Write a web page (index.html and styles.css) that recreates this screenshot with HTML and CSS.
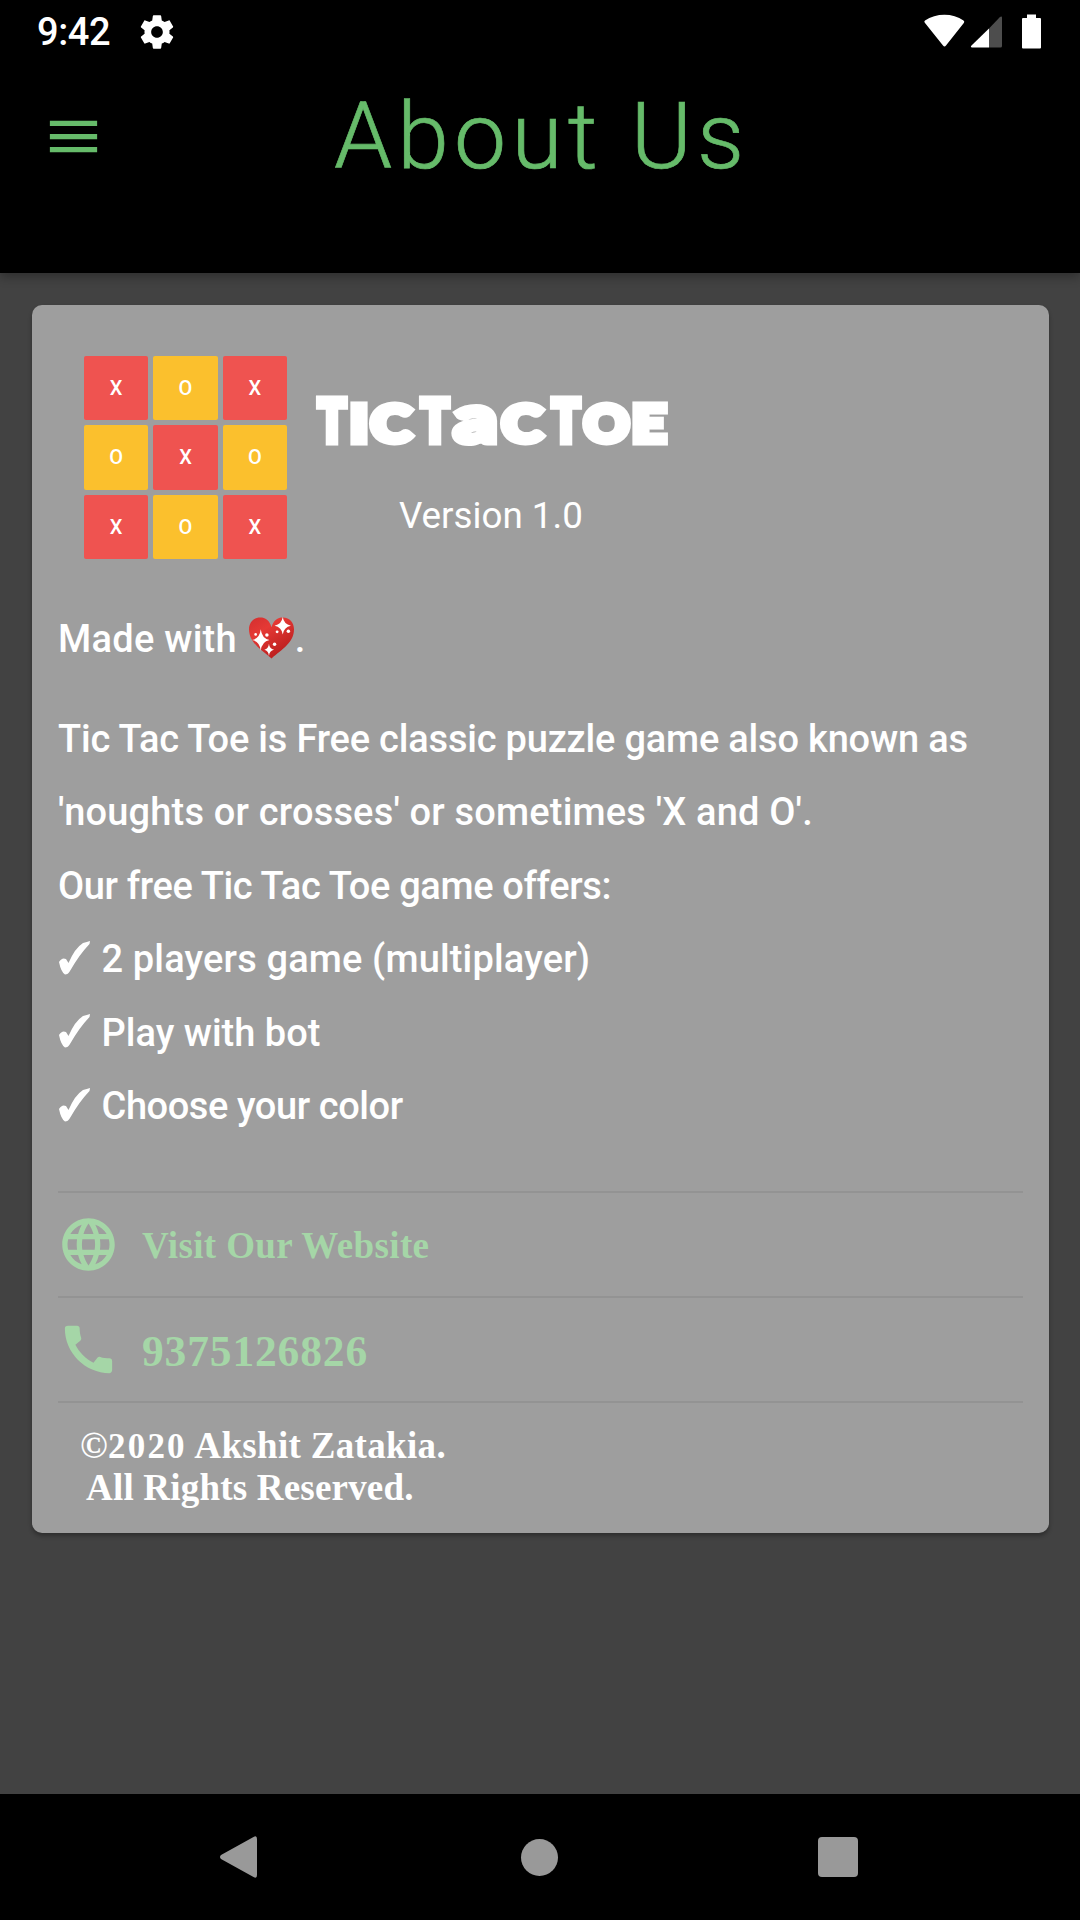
FILE: index.html
```html
<!DOCTYPE html>
<html lang="en">
<head>
<meta charset="utf-8">
<title>About Us</title>
<link rel="stylesheet" href="styles.css">
</head>
<body>
<header class="header">
  <div class="status">
    <span class="time">9:42</span>
    <svg class="gear" viewBox="0 0 24 24"><path d="M19.43 12.98c.04-.32.07-.64.07-.98s-.03-.66-.07-.98l2.11-1.65c.19-.15.24-.42.12-.64l-2-3.46c-.12-.22-.39-.3-.61-.22l-2.49 1c-.52-.4-1.08-.73-1.69-.98l-.38-2.65C14.46 2.18 14.25 2 14 2h-4c-.25 0-.46.18-.49.42l-.38 2.65c-.61.25-1.17.59-1.69.98l-2.49-1c-.23-.09-.49 0-.61.22l-2 3.46c-.13.22-.07.49.12.64l2.11 1.65c-.04.32-.07.65-.07.98s.03.66.07.98l-2.11 1.65c-.19.15-.24.42-.12.64l2 3.46c.12.22.39.3.61.22l2.49-1c.52.4 1.08.73 1.69.98l.38 2.65c.03.24.24.42.49.42h4c.25 0 .46-.18.49-.42l.38-2.65c.61-.25 1.17-.59 1.69-.98l2.49 1c.23.09.49 0 .61-.22l2-3.46c.12-.22.07-.49-.12-.64l-2.11-1.65zM12 15.5c-1.93 0-3.5-1.57-3.5-3.5s1.57-3.5 3.5-3.5 3.5 1.57 3.5 3.5-1.57 3.5-3.5 3.5z"/></svg>
    <svg class="signals" viewBox="0 0 120 36">
      <path d="M5 9Q3.500 7.500 5 6.500C16-1.200 33-1.200 43.500 6.500Q45 7.500 43.800 9L26 31.500Q24.500 33.500 23 31.500Z"/>
      <path fill="#4d4d4d" d="M69 14.500 79.500 3.500Q82 1.500 82 4V32Q82 33.500 80.500 33.500H69Z"/>
      <path d="M69 14.500V33.500H52Q50 33 51.500 31.500Z"/>
      <path d="M107 0.500H116V4H120Q121 4 121 5V33.500Q121 34.500 120 34.500H103Q102 34.500 102 33.500V5Q102 4 103 4H107Z"/>
    </svg>
  </div>
  <div class="appbar">
    <svg class="menu" viewBox="0 0 24 24"><path d="M3 18h18v-2H3v2zm0-5h18v-2H3v2zm0-7v2h18V6H3z"/></svg>
    <h1 class="title">About Us</h1>
  </div>
</header>
<main class="main">
  <section class="card">
    <div class="intro">
      <div class="board">
        <span class="x">X</span><span class="o">O</span><span class="x">X</span>
        <span class="o">O</span><span class="x">X</span><span class="o">O</span>
        <span class="x">X</span><span class="o">O</span><span class="x">X</span>
      </div>
      <div class="product">
        <svg class="wordmark" viewBox="0 0 354 56">
          <g class="cap"><text x="3" y="48" textLength="28" lengthAdjust="spacingAndGlyphs">T</text><text x="106" y="48" textLength="28" lengthAdjust="spacingAndGlyphs">T</text><text x="237" y="48" textLength="28" lengthAdjust="spacingAndGlyphs">T</text></g>
          <g class="small"><text x="35" y="48" textLength="18" lengthAdjust="spacingAndGlyphs">I</text><text x="56" y="48" textLength="40" lengthAdjust="spacingAndGlyphs">C</text><text class="low" x="139" y="48" textLength="43" lengthAdjust="spacingAndGlyphs">a</text><text x="187" y="48" textLength="40" lengthAdjust="spacingAndGlyphs">C</text><text x="269" y="48" textLength="45" lengthAdjust="spacingAndGlyphs">O</text><text x="317" y="48" textLength="34" lengthAdjust="spacingAndGlyphs">E</text></g>
        </svg>
        <p class="version">Version 1.0</p>
      </div>
    </div>
    <p class="made"><span>Made with</span>
      <svg class="heart" viewBox="0 0 44 41"><defs><linearGradient id="h" x1="0" y1="0" x2=".7" y2="1"><stop offset="0" stop-color="#d32f2f"/><stop offset=".35" stop-color="#e53935"/><stop offset="1" stop-color="#b71c1c"/></linearGradient></defs><path fill="url(#h)" d="M22 10C20 3 16 .5 11 .5 4 .5 0 6 0 12 0 25 12 32 22 40.500 32 32 44 25 44 12 44 6 40 .5 33 .5 28 .5 24 3 22 10Z"/><g fill="#fff"><path d="M33 0Q34 7 41 8.500 34 10 33 17 32 10 25 8.500 32 7 33 0ZM11.500 12Q12.500 21 20 22.500 12.500 24 11.500 33 10.500 24 3 22.500 10.500 21 11.500 12ZM19.500 26Q20 31 24.500 32 20 33 19.500 38 19 33 15 32 19 31 19.500 26Z"/><circle cx="6.500" cy="17" r="1.300"/><circle cx="17.500" cy="17.500" r="1.700"/><circle cx="27.500" cy="14.500" r="1.400"/><circle cx="38.500" cy="14" r="1.700"/><circle cx="25" cy="26.500" r="1.700"/></g></svg><span>.</span></p>
    <div class="about">
      <p class="lead">Tic Tac Toe is Free classic puzzle game also known as</p>
      <p class="alias">'noughts or crosses' or sometimes 'X and O'.</p>
      <p class="offers">Our free Tic Tac Toe game offers:</p>
      <p class="item players"><svg class="tick" viewBox="0 0 31 34"><path d="M0 21Q3 16 7 18L9.500 22Q16 7 24 2 28 1 31 0L30.500 3Q20 14 11 30 9 33.500 6 33.500 2 31 0 21Z"/></svg>2 players game (multiplayer)</p>
      <p class="item"><svg class="tick" viewBox="0 0 31 34"><path d="M0 21Q3 16 7 18L9.500 22Q16 7 24 2 28 1 31 0L30.500 3Q20 14 11 30 9 33.500 6 33.500 2 31 0 21Z"/></svg>Play with bot</p>
      <p class="item color"><svg class="tick" viewBox="0 0 31 34"><path d="M0 21Q3 16 7 18L9.500 22Q16 7 24 2 28 1 31 0L30.500 3Q20 14 11 30 9 33.500 6 33.500 2 31 0 21Z"/></svg>Choose your color</p>
    </div>
    <div class="link">
      <svg viewBox="0 0 24 24"><path d="M11.990 2C6.470 2 2 6.480 2 12s4.470 10 9.990 10C17.520 22 22 17.520 22 12S17.520 2 11.990 2zm6.930 6h-2.950c-.32-1.250-.78-2.450-1.380-3.560 1.840.63 3.370 1.910 4.330 3.560zM12 4.040c.83 1.200 1.480 2.530 1.910 3.960h-3.820c.43-1.430 1.080-2.760 1.910-3.960zM4.260 14C4.100 13.360 4 12.690 4 12s.1-1.360.26-2h3.380c-.08.66-.14 1.320-.14 2 0 .68.06 1.340.14 2H4.260zm.82 2h2.950c.32 1.250.78 2.450 1.380 3.560-1.840-.63-3.370-1.900-4.330-3.560zm2.950-8H5.080c.96-1.660 2.490-2.930 4.330-3.560C8.810 5.550 8.350 6.750 8.030 8zM12 19.960c-.83-1.200-1.480-2.530-1.910-3.960h3.820c-.43 1.430-1.080 2.760-1.910 3.960zM14.340 14H9.660c-.09-.66-.16-1.320-.16-2 0-.68.07-1.350.16-2h4.680c.09.65.16 1.320.16 2 0 .68-.07 1.340-.16 2zm.25 5.560c.6-1.110 1.060-2.310 1.380-3.560h2.950c-.96 1.650-2.490 2.930-4.330 3.560zM16.360 14c.08-.66.14-1.320.14-2 0-.68-.06-1.340-.14-2h3.380c.16.64.26 1.310.26 2s-.1 1.360-.26 2h-3.380z"/></svg>
      <span class="site">Visit Our Website</span>
    </div>
    <div class="link">
      <svg viewBox="0 0 24 24"><path d="M20.010 15.380c-1.230 0-2.420-.2-3.530-.56-.35-.12-.74-.03-1.010.24l-1.570 1.970c-2.830-1.350-5.480-3.900-6.890-6.830l1.950-1.660c.27-.28.35-.67.24-1.020-.37-1.110-.56-2.300-.56-3.530 0-.54-.45-.99-.99-.99H4.190C3.650 3 3 3.240 3 3.990 3 13.280 10.730 21 20.010 21c.71 0 .99-.63.99-1.180v-3.450c0-.54-.45-.99-.99-.99z"/></svg>
      <span class="phone">9375126826</span>
    </div>
    <footer class="legal">
      <p class="owner">©<span class="year">2020</span> Akshit Zatakia.</p>
      <p class="rights">All Rights Reserved.</p>
    </footer>
  </section>
</main>
<nav class="nav">
  <svg viewBox="0 0 38 42"><path d="M1 23Q-1 21 1 19L33.500 1Q37 -1 37 3V39Q37 43 33.500 41Z"/></svg>
  <span class="home"></span>
  <span class="recent"></span>
</nav>
</body>
</html>
```
FILE: styles.css
```css
* { box-sizing: border-box; margin: 0; padding: 0; }
body { width: 1080px; height: 1920px; display: flex; flex-direction: column; background: #424242; color: #fff; font-family: Roboto, sans-serif; overflow: hidden; }
svg { display: block; fill: currentColor; flex: none; overflow: visible; }
.header { height: 273px; background: #000; box-shadow: 0 4px 10px rgba(0,0,0,.3); }
.status { height: 63px; display: flex; align-items: center; padding: 0 40px 0 37px; }
.time { font-size: 38px; font-weight: 500; line-height: 63px; letter-spacing: -.4px; padding-top: 2px; }
.gear { width: 40px; height: 40px; margin-left: 27px; }
.signals { width: 120px; height: 36px; margin-left: auto; }
.appbar { height: 147px; display: flex; align-items: center; padding-left: 42px; color: #66bb6a; }
.menu { width: 63px; height: 63px; }
.title { font-size: 93px; font-weight: 300; margin-left: 229px; white-space: nowrap; letter-spacing: 5.2px; -webkit-text-stroke: .7px #66bb6a; }
.main { flex: 1; padding: 31.5px 31.5px 0 31.5px; }
.card { height: 1228.5px; background: #9e9e9e; border-radius: 10px; padding: 51.5px 26px 0 26.5px; box-shadow: 0 3px 4px rgba(0,0,0,.3); }
.intro { display: flex; height: 247px; padding-left: 26px; }
.board { width: 203px; height: 203px; display: grid; grid-template-columns: repeat(3, 1fr); gap: 5px; }
.board span { display: flex; align-items: center; justify-content: center; border-radius: 2px; font-size: 20px; font-weight: 500; }
.x { background: #ef5350; }
.o { background: #fbc02d; }
.product { margin-left: 28px; padding-top: 38px; }
.wordmark { width: 354px; height: 56px; font-family: Lato, sans-serif; font-weight: 900; stroke: #fff; stroke-width: 7px; }
.cap { font-size: 59px; }
.small { font-size: 51px; }
.low { font-size: 67px; }
.version { font-size: 36.75px; line-height: 44px; margin: 43.500px 0 0 84px; }
.made, .about { font-size: 38px; font-weight: 500; line-height: 73.400px; white-space: nowrap; }
.made { display: flex; align-items: center; height: 73px; letter-spacing: .25px; }
.heart { width: 45px; height: 42px; margin: 0 1px 3px 12px; }
.about { margin-top: 27px; height: 488px; }
.lead { letter-spacing: -.2px; }
.alias { letter-spacing: .18px; }
.offers { letter-spacing: -.36px; }
.players { letter-spacing: .15px; }
.color { letter-spacing: -.42px; }
.item { display: flex; align-items: center; }
.tick { width: 31px; height: 34px; margin: 0 11.5px 4px 1px; }
.link { height: 105px; border-top: 2px solid #939393; display: flex; align-items: center; color: #a5d6a7; font-family: "Liberation Serif", serif; font-weight: 700; }
.link svg { width: 63px; height: 63px; margin: 0 22px 0 -1px; }
.link span { padding-top: 2px; }
.site { font-size: 37px; letter-spacing: .38px; }
.phone { font-size: 43.500px; letter-spacing: .850px; }
.legal { border-top: 2px solid #939393; padding: 22px 0 0 22px; font: 700 37px/42px "Liberation Serif", serif; }
.owner { letter-spacing: .33px; }
.rights { padding-left: 6px; letter-spacing: .2px; }
.year { font-size: 35px; line-height: 1; letter-spacing: 2.2px; }
.nav { height: 126px; background: #000; color: #999; display: flex; align-items: center; padding-left: 220px; }
.nav svg { width: 38px; height: 42px; }
.home { width: 37px; height: 37px; border-radius: 50%; background: #999; margin-left: 263px; }
.recent { width: 40px; height: 40px; border-radius: 4px; background: #999; margin-left: 260px; }
```
